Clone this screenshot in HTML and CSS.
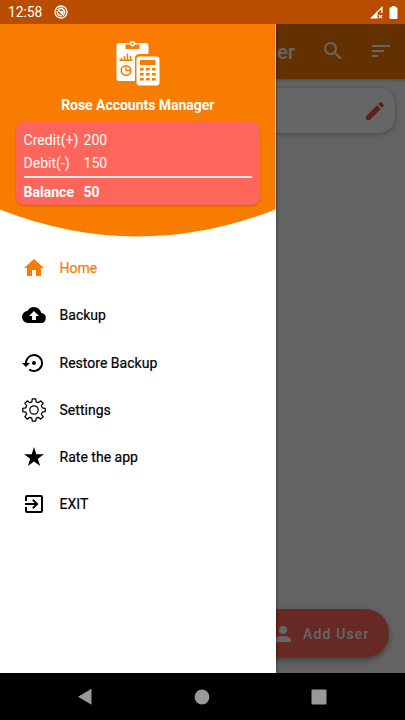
FILE: index.html
```
<!DOCTYPE html>
<html lang="en">
<head>
<meta charset="utf-8">
<title>Rose Accounts Manager</title>
<link rel="stylesheet" href="styles.css">
</head>
<body>
<div class="phone">
  <header class="status">
    <span class="clock">12:58</span>
    <svg class="dnd" viewBox="0 0 14 14"><circle cx="7" cy="7" r="6" fill="none" stroke="#fff" stroke-width="1.3"/><path d="M3.5 4.2 9.8 10.5M4.8 3.9A3.9 3.9 0 0 1 10.1 9.1M3.3 6.2A3.9 3.9 0 0 0 7.7 10.8" fill="none" stroke="#fff" stroke-width="1.5"/><path d="m6 6 3.3-.2v3z" fill="#fff"/></svg>
    <svg class="signal" viewBox="0 0 13 13"><path d="M0 12.5 12.5 0v7H11V3.5L7.500 7v5.500z" fill="#fff"/><path d="m8.800 8.800 3.400 3.400m0-3.400-3.400 3.400" stroke="#fff" stroke-width="1.200"/></svg>
    <svg class="battery" viewBox="0 0 8 13"><path d="M2.300 0h3.400v1.200h1.100Q8 1.200 8 2.400v9.400Q8 13 6.800 13H1.200Q0 13 0 11.800V2.400q0-1.200 1.200-1.200h1.100z" fill="#fff"/></svg>
  </header>
  <main class="stage">
    <section class="page">
      <div class="appbar">
        <h1>Rose Accounts Manager</h1>
        <svg class="search" viewBox="0 0 24 24"><path d="M15.500 14h-.790l-.280-.270A6.470 6.470 0 0 0 16 9.500 6.500 6.500 0 1 0 9.500 16c1.610 0 3.090-.590 4.230-1.570l.270.280v.790l5 4.990L20.490 19l-4.990-5zm-6 0a4.500 4.500 0 1 1 0-9 4.500 4.500 0 0 1 0 9z"/></svg>
        <svg class="sort" viewBox="0 0 24 24"><path d="M3 18h6v-2H3v2zM3 6v2h18V6H3zm0 7h12v-2H3v2z"/></svg>
      </div>
      <div class="user-card">
        <svg class="pencil" viewBox="0 0 24 24"><path d="M3 17.250V21h3.750L17.810 9.940l-3.750-3.750L3 17.250zM20.710 7.040a1 1 0 0 0 0-1.410l-2.340-2.340a1 1 0 0 0-1.410 0l-1.830 1.830 3.750 3.750 1.830-1.830z"/></svg>
      </div>
      <button class="add-user">
        <svg viewBox="0 0 24 24"><path d="M12 12a4 4 0 1 0 0-8 4 4 0 0 0 0 8zm0 2c-2.670 0-8 1.340-8 4v2h16v-2c0-2.660-5.330-4-8-4z"/></svg>
        <span>Add User</span>
      </button>
    </section>
    <div class="scrim"></div>
    <aside class="drawer">
      <div class="hero">
        <svg class="curve" viewBox="0 0 276 213" preserveAspectRatio="none"><path d="M0 0H276V185.500Q138 239.500 0 185.500z" fill="#f77c00"/></svg>
        <div class="hero-content">
          <svg class="logo" viewBox="0 0 44 45">
            <path d="M3 2h10.500C14 .8 15 0 16.500 0S19 .8 19.500 2H30q2.500 0 2.500 2.500V13h-9q-4.500 0-4.500 4.500V40H3Q.5 40 .5 37.500v-33Q.5 2 3 2z" fill="#fff"/>
            <path d="M9.500 3.500H14q.5 2 2.500 2t2.500-2h4.500V8h-14z" fill="#f77c00"/><circle cx="16.500" cy="2.700" r="1.100" fill="#f77c00"/>
            <path d="M3.500 19.200h13M5.500 19v-2.500M8.500 19v-4M11.500 19v-6.500M14.500 19v-4" stroke="#f77c00" stroke-width="1.400" fill="none"/>
            <circle cx="10" cy="29.500" r="4.700" stroke="#f77c00" stroke-width="1.600" fill="none"/><path d="M10 25v4.500h4.500" stroke="#f77c00" stroke-width="1.400" fill="none"/>
            <rect x="20.500" y="15.500" width="23" height="29" rx="3" fill="#fff"/>
            <path d="M24 19h15.500v5H24z" fill="#f77c00"/>
            <path d="M24 28.300h3.700M30 28.300h3.700M36 28.300h3.700M24 33.300h3.700M30 33.300h3.700M36 33.300h3.700M24 38.300h3.700M30 38.300h3.700M36 38.300h3.700" stroke="#f77c00" stroke-width="2.600"/>
          </svg>
          <h2>Rose Accounts Manager</h2>
          <div class="summary">
            <div class="row"><span>Credit(+)</span><span>200</span></div>
            <div class="row"><span>Debit(-)</span><span>150</span></div>
            <div class="row total"><span>Balance</span><span>50</span></div>
          </div>
        </div>
      </div>
      <nav class="menu">
        <a class="item active"><svg viewBox="0 0 24 24"><path d="M10 20v-6h4v6h5v-8h3L12 3 2 12h3v8z"/></svg><span>Home</span></a>
        <a class="item"><svg viewBox="0 0 24 24"><path d="M19.350 10.040A7.490 7.490 0 0 0 12 4C9.110 4 6.600 5.640 5.350 8.040A5.994 5.994 0 0 0 0 14a6 6 0 0 0 6 6h13a5 5 0 0 0 .350-9.960zM14 13v4h-4v-4H7l5-5 5 5h-3z"/></svg><span>Backup</span></a>
        <a class="item"><svg viewBox="0 0 24 24"><path d="M14 12a2 2 0 1 0-4 0 2 2 0 0 0 4 0zm-2-9a9 9 0 0 0-9 9H0l4 4 4-4H5a7 7 0 1 1 2.940 5.700l-1.420 1.440A9 9 0 1 0 12 3z"/></svg><span>Restore Backup</span></a>
        <a class="item"><svg viewBox="0 0 24 24"><g transform="translate(12 12)" fill="none" stroke="#000" stroke-width="1.250" stroke-linejoin="round"><path d="M-1.700-11.200H1.700L2.200-8.200 4.240-7.350 6.720-9.120 9.120-6.720 7.350-4.240 8.200-2.200 11.200-1.700V1.700L8.200 2.200 7.350 4.240 9.120 6.720 6.720 9.120 4.240 7.350 2.200 8.200 1.700 11.200H-1.700L-2.200 8.200-4.240 7.350-6.720 9.120-9.120 6.720-7.350 4.240-8.200 2.200-11.200 1.700V-1.700L-8.200-2.200-7.350-4.240-9.120-6.720-6.720-9.120-4.240-7.350-2.200-8.200z"/><circle r="4.200"/></g></svg><span>Settings</span></a>
        <a class="item"><svg viewBox="0 0 24 24"><path d="m12 2 2.350 7.200H22l-6.180 4.500L18.180 21 12 16.500 5.820 21l2.360-7.300L2 9.200h7.650z"/></svg><span>Rate the app</span></a>
        <a class="item"><svg viewBox="0 0 24 24"><path d="M10.090 15.590 11.500 17l5-5-5-5-1.410 1.410L12.670 11H3v2h9.670l-2.580 2.590zM19 3H5a2 2 0 0 0-2 2v4h2V5h14v14H5v-4H3v4a2 2 0 0 0 2 2h14a2 2 0 0 0 2-2V5a2 2 0 0 0-2-2z"/></svg><span>EXIT</span></a>
      </nav>
    </aside>
  </main>
  <footer class="navbar">
    <svg viewBox="0 0 16 18"><path d="M14.500.8v16L1 8.800z"/></svg>
    <svg viewBox="0 0 16 16"><circle cx="8" cy="8" r="7.400"/></svg>
    <svg viewBox="0 0 16 16"><rect x=".5" y=".5" width="15" height="15" rx="1"/></svg>
  </footer>
</div>
</body>
</html>
```
FILE: styles.css
```
* { box-sizing: border-box; }
body { margin: 0; font-family: Roboto, "Liberation Sans", sans-serif; }
h1, h2 { margin: 0; }
svg { display: block; flex: none; }
.phone { width: 405px; height: 720px; display: flex; flex-direction: column; overflow: hidden; background: #000; }
.status { height: 23.5px; flex: none; background: #ba4c00; color: #fff; display: flex; align-items: center; padding: 1px 7px 0 8px; }
.clock { font-size: 14px; letter-spacing: -.1px; }
.dnd { width: 14px; height: 14px; margin-left: 11.5px; }
.signal { width: 13px; height: 13px; margin-left: auto; margin-right: 6px; }
.battery { width: 9px; height: 13px; }
.stage { position: relative; flex: none; height: 649.5px; overflow: hidden; }
.page { height: 100%; background: #f7f7f7; display: flex; flex-direction: column; }
.appbar { height: 55px; flex: none; background: #f77c00; color: #fff; fill: #fff; display: flex; align-items: center; padding-right: 12px; box-shadow: 0 1px 3px rgba(0,0,0,.3); }
.appbar h1 { width: 295px; padding-top: 1px; text-align: right; white-space: nowrap; font-size: 20px; font-weight: 500; }
.search { width: 24px; height: 24px; margin-left: 26px; }
.sort { width: 24px; height: 24px; margin-left: auto; }
.user-card { height: 45px; margin: 9.5px 10px 0; border-radius: 16px; background: #fff; box-shadow: 0 1px 5px rgba(0,0,0,.3); display: flex; align-items: center; justify-content: flex-end; padding-right: 8px; }
.pencil { width: 24px; height: 24px; fill: #f44d45; }
.add-user { margin: auto 16px 16px auto; width: 136px; height: 48px; border: 0; border-radius: 24px; background: #ff665b; color: #fff; fill: #fff; display: flex; align-items: center; gap: 8.5px; padding: 1px 0 0 17.5px; font: 500 14px Roboto, sans-serif; letter-spacing: 1.15px; box-shadow: 0 3px 6px rgba(0,0,0,.4); }
.add-user svg { width: 24px; height: 24px; }
.scrim { position: absolute; inset: 0; background: rgba(0,0,0,.6); }
.drawer { position: absolute; top: 0; left: 0; bottom: 0; width: 275.5px; background: #fff; box-shadow: 0 0 3px rgba(0,0,0,.6); }
.hero { position: relative; height: 213px; }
.curve { position: absolute; inset: 0; width: 100%; height: 100%; }
.hero-content { position: relative; display: flex; flex-direction: column; align-items: center; padding: 17.5px 15.5px 0; color: #fff; }
.logo { width: 44px; height: 45px; }
.hero h2 { margin-top: 10px; line-height: 18px; font-size: 14px; font-weight: 700; letter-spacing: -.03px; }
.summary { width: 244.5px; height: 83px; margin-top: 8px; border-radius: 8px; background: #ff665b; padding: 7px 8px 0; font-size: 14px; box-shadow: 0 1px 2px rgba(0,0,0,.2); }
.row { display: grid; grid-template-columns: 60px 1fr; line-height: 23px; letter-spacing: .03px; }
.total { border-top: 2px solid #ffe9e7; margin-top: 1px; padding-top: 3px; font-weight: 700; }
.menu { padding-top: 8px; }
.item { height: 47.25px; display: flex; align-items: center; gap: 14px; padding-left: 21.5px; font-size: 14px; font-weight: 400; letter-spacing: .02px; color: #000; fill: currentColor; -webkit-text-stroke: .2px currentColor; }
.item svg { width: 24px; height: 24px; }
.active { color: #f77c00; }
.navbar { flex: 1; background: #000; display: flex; align-items: center; justify-content: center; gap: 101px; fill: #999; padding: 0 1px 0 0; }
.navbar svg { width: 16px; height: 18px; }
```
